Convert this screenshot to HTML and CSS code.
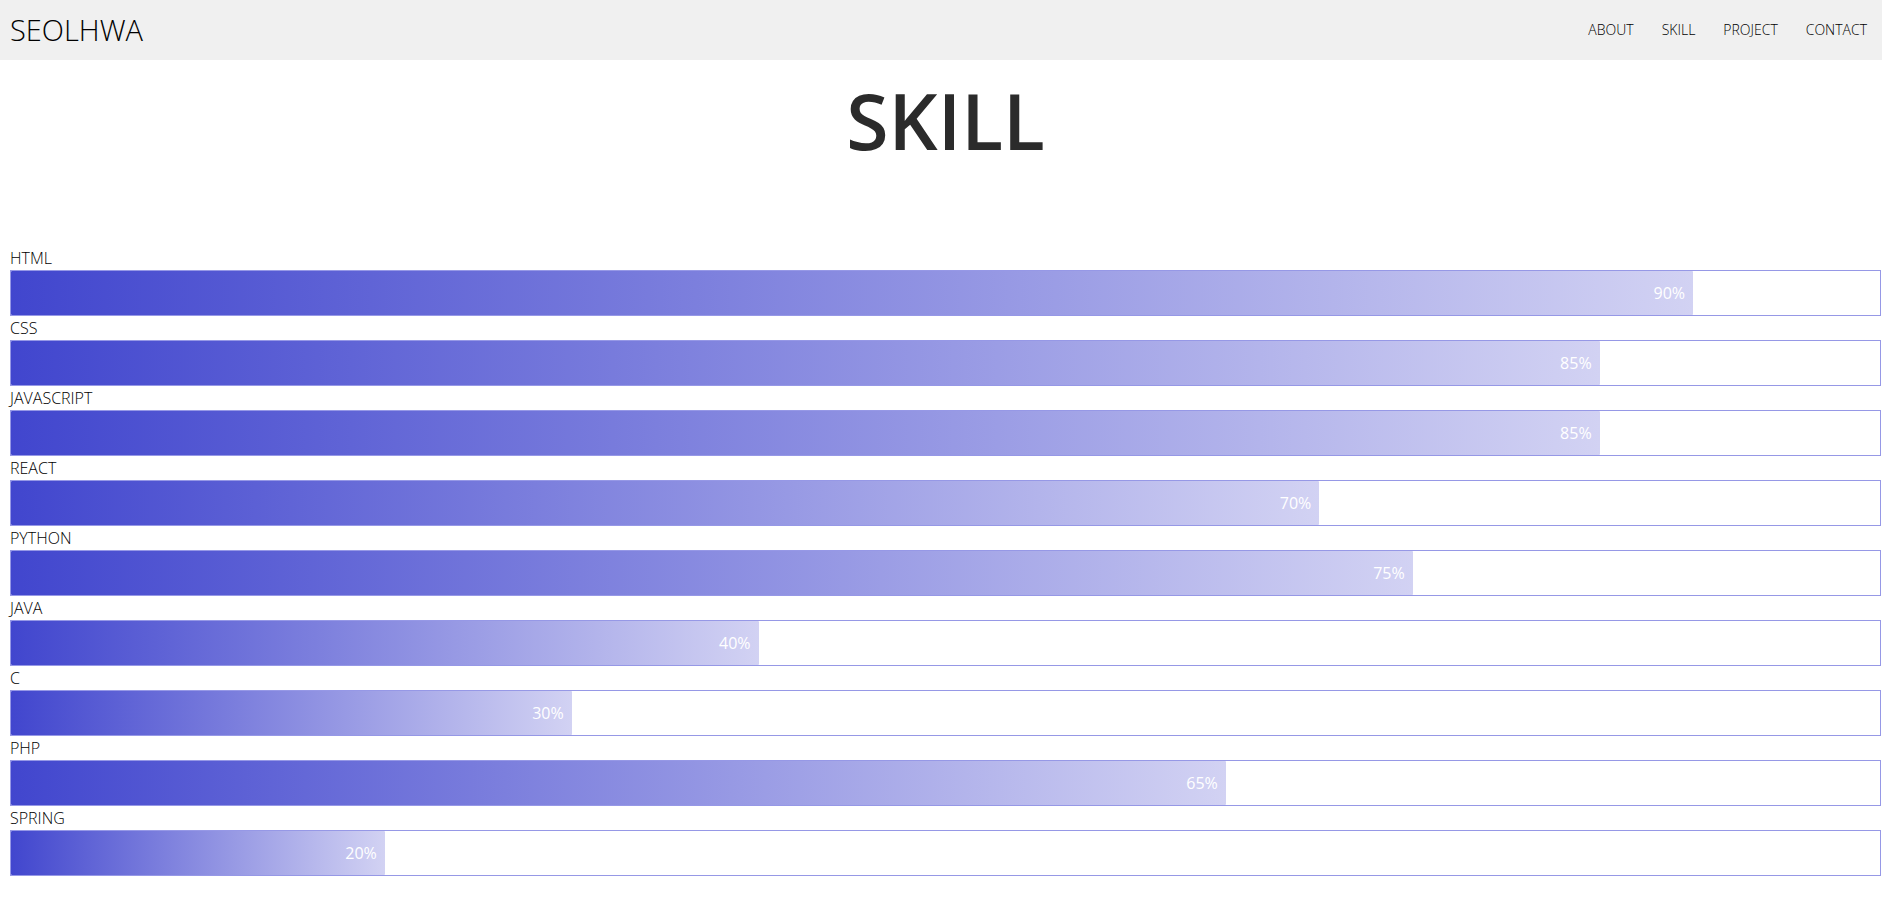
FILE: index.html
```html
<!DOCTYPE html>
<html lang="en">
<head>
<meta charset="utf-8">
<title>SEOLHWA</title>
<link rel="stylesheet" href="styles.css">
</head>
<body>
<header class="header">
  <a class="logo" href="#">SEOLHWA</a>
  <nav class="nav">
    <a href="#about">ABOUT</a>
    <a href="#skill">SKILL</a>
    <a href="#project">PROJECT</a>
    <a href="#contact">CONTACT</a>
  </nav>
</header>
<main class="skills" id="skill">
  <h1 class="title">SKILL</h1>
  <div class="label">HTML</div>
  <div class="bar"><div class="fill" style="width:90%">90%</div></div>
  <div class="label">CSS</div>
  <div class="bar"><div class="fill" style="width:85%">85%</div></div>
  <div class="label">JAVASCRIPT</div>
  <div class="bar"><div class="fill" style="width:85%">85%</div></div>
  <div class="label">REACT</div>
  <div class="bar"><div class="fill" style="width:70%">70%</div></div>
  <div class="label">PYTHON</div>
  <div class="bar"><div class="fill" style="width:75%">75%</div></div>
  <div class="label">JAVA</div>
  <div class="bar"><div class="fill" style="width:40%">40%</div></div>
  <div class="label">C</div>
  <div class="bar"><div class="fill" style="width:30%">30%</div></div>
  <div class="label">PHP</div>
  <div class="bar"><div class="fill" style="width:65%">65%</div></div>
  <div class="label">SPRING</div>
  <div class="bar"><div class="fill" style="width:20%">20%</div></div>
</main>
</body>
</html>
```
FILE: styles.css
```css
* {
  box-sizing: border-box;
}

body {
  margin: 0;
  background: #fff;
  color: #000;
  font-family: "Open Sans", "Noto Sans", sans-serif;
  font-size: 16px;
  font-weight: 300;
}

.header {
  display: flex;
  align-items: center;
  justify-content: space-between;
  height: 60px;
  padding: 0 15px 2px 10px;
  background: #f0f0f0;
}

.header a {
  color: #000;
  text-decoration: none;
}

.logo {
  font-size: 29px;
}

.nav {
  display: flex;
  gap: 28px;
  font-size: 14px;
}

.skills {
  padding: 0 1px 40px 10px;
}

.title {
  margin: 0;
  padding: 11px 0 75px;
  color: #2b2b2b;
  font-size: 77px;
  font-weight: 600;
  line-height: 100px;
  text-align: center;
}

.label {
  line-height: 24px;
}

.bar {
  height: 46px;
  border: 1px solid #9698e6;
}

.fill {
  height: 100%;
  padding-right: 8px;
  border-radius: 1px;
  background: linear-gradient(to right, #4146ce, #d2d2f3);
  color: #fff;
  font-weight: 400;
  line-height: 44px;
  text-align: right;
}
```
